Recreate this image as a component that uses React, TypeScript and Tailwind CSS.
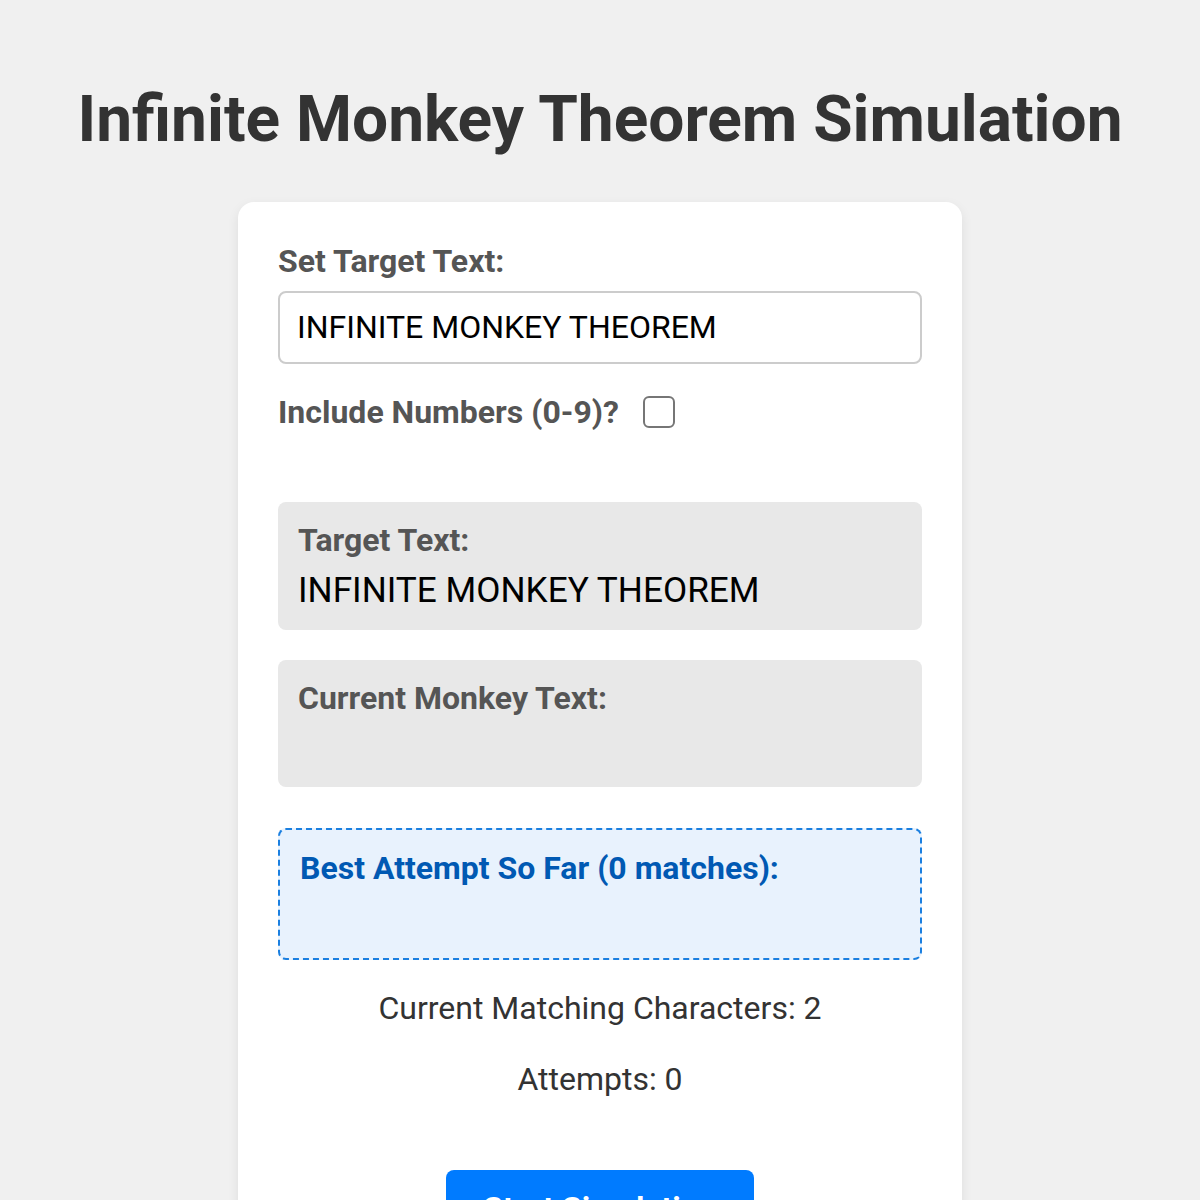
import React, { useState } from 'react';

const App = () => {
  const [target, setTarget] = useState<string>('INFINITE MONKEY THEOREM');
  const [includeNumbers, setIncludeNumbers] = useState<boolean>(false);
  const attempts = 0;
  const matching = 2;
  const bestMatches = 0;

  return (
    <div className="min-h-screen bg-[#f0f0f0] font-['Roboto',sans-serif] text-[#333] flex flex-col items-center">
      <h1 className="mt-[80px] mb-[42px] text-[64px] font-bold leading-[80px] text-[#333] text-center">
        Infinite Monkey Theorem Simulation
      </h1>

      <div className="w-[724px] bg-white rounded-[16px] shadow-[0_4px_12px_rgba(0,0,0,0.08)] px-[40px] pt-[41px] pb-[40px] flex flex-col">
        <label className="text-[32px] font-bold text-[#555] leading-[37.5px]">
          Set Target Text:
        </label>
        <input
          value={target}
          onChange={(e) => setTarget(e.target.value.toUpperCase())}
          className="mt-[10px] w-full h-[73px] border-2 border-[#ccc] rounded-[8px] px-[17px] text-[32px] text-black outline-none"
        />

        <div className="mt-[30px] flex items-center gap-[24px]">
          <span className="text-[32px] font-bold text-[#555] leading-[37.5px]">
            Include Numbers (0-9)?
          </span>
          <input
            type="checkbox"
            checked={includeNumbers}
            onChange={() => setIncludeNumbers(!includeNumbers)}
            className="appearance-none w-[32px] h-[32px] border-2 border-[#767676] rounded-[6px] bg-white checked:bg-[#007bff]"
          />
        </div>

        {/* display boxes */}
        <div className="mt-[71px] bg-[#e8e8e8] rounded-[8px] p-[20px] flex flex-col">
          <div className="text-[32px] font-bold text-[#555] leading-[37.5px]">
            Target Text:
          </div>
          <div className="mt-[10px] text-[35.2px] text-black leading-[40px] min-h-[40px]">
            {target}
          </div>
        </div>

        <div className="mt-[30px] bg-[#e8e8e8] rounded-[8px] p-[20px] flex flex-col">
          <div className="text-[32px] font-bold text-[#555] leading-[37.5px]">
            Current Monkey Text:
          </div>
          <div className="mt-[10px] text-[35.2px] text-black leading-[40px] min-h-[40px]"></div>
        </div>

        <div className="mt-[41px] bg-[#e8f2fd] border-2 border-dashed border-[#1a7fe0] rounded-[8px] p-[20px] flex flex-col">
          <div className="text-[32px] font-bold text-[#0059b3] leading-[37.5px]">
            Best Attempt So Far ({bestMatches} matches):
          </div>
          <div className="mt-[10px] text-[35.2px] text-black leading-[40px] min-h-[40px]"></div>
        </div>

        <p className="mt-[30px] text-[32px] leading-[37.5px] text-center text-[#333]">
          Current Matching Characters: {matching}
        </p>
        <p className="mt-[34px] text-[32px] leading-[37.5px] text-center text-[#333]">
          Attempts: {attempts}
        </p>

        <div className="mt-[71px] flex justify-center">
          <button className="w-[308px] h-[76px] bg-[#007bff] text-white text-[32px] font-bold rounded-[8px]">
            Start Simulation
          </button>
        </div>
      </div>
    </div>
  );
};

export default App;
